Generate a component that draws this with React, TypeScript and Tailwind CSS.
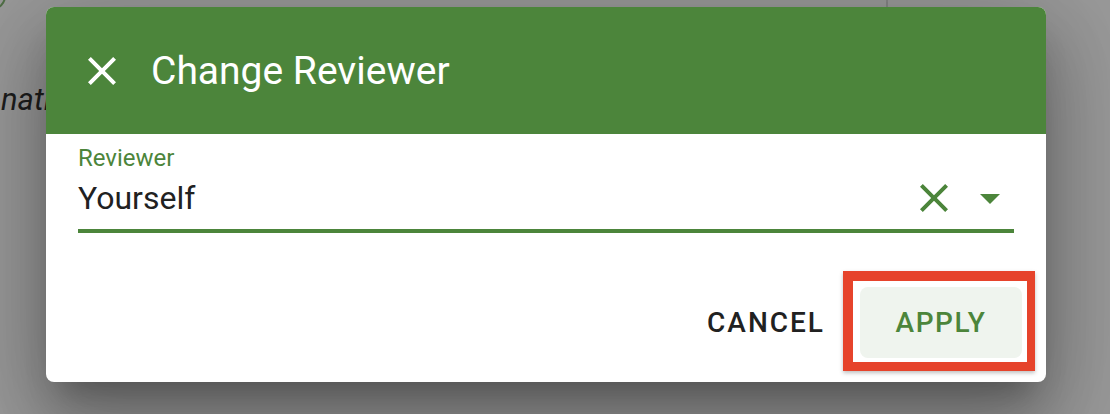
import React from 'react';

const green = '#4c853b';

function CloseIcon({ className }: { className?: string }) {
  return (
    <svg viewBox="0 0 24 24" className={className} fill="currentColor">
      <path d="M19 6.41 17.59 5 12 10.59 6.41 5 5 6.41 10.59 12 5 17.59 6.41 19 12 13.41 17.59 19 19 17.59 13.41 12z" />
    </svg>
  );
}

function ArrowDropDownIcon({ className }: { className?: string }) {
  return (
    <svg viewBox="0 0 24 24" className={className} fill="currentColor">
      <path d="M7 10l5 5 5-5z" />
    </svg>
  );
}

export default function App() {
  return (
    <div className="relative w-[1110px] h-[414px] overflow-hidden bg-[#999999] font-['Roboto',_'Liberation_Sans',_sans-serif]">
      {/* page underneath the backdrop */}
      <div className="flex flex-col">
        <div className="flex h-[8px]">
          <div className="ml-[886px] w-[2px] bg-[#848484]" />
        </div>
        <div className="absolute -left-[22px] -top-[18px] w-[28px] h-[28px] rounded-full border-2 border-[#4f6e45]" />
        <div className="mt-[72px] pl-[1px] text-[31px] italic leading-[40px] text-[#1d1d1d]">nation</div>
      </div>

      {/* dialog */}
      <div className="absolute left-[46px] top-[7px] w-[1000px] h-[375px] flex flex-col rounded-[8px] overflow-hidden bg-white shadow-[0_22px_30px_-14px_rgba(0,0,0,0.25),0_48px_76px_6px_rgba(0,0,0,0.2),0_18px_92px_16px_rgba(0,0,0,0.16)]">
        <div className="h-[127px] flex items-center pl-[32px] bg-[#4c853b] text-white">
          <button className="w-[48px] h-[48px] flex items-center justify-center">
            <CloseIcon className="w-[48px] h-[48px]" />
          </button>
          <h2 className="ml-[25px] text-[39px] leading-[48px] font-normal">Change Reviewer</h2>
        </div>

        <div className="px-[32px] pt-[12px]">
          <label className="block text-[24px] leading-[24px]" style={{ color: green }}>
            Reviewer
          </label>
          <div className="h-[63px] flex items-center border-b-4 border-[#4c853b]">
            <span className="flex-1 text-[32px] leading-[32px] text-[#212121] -mt-[4px]">Yourself</span>
            <div className="flex items-center gap-[8px] -mt-[4px] text-[#4c853b]">
              <CloseIcon className="w-[48px] h-[48px]" />
              <ArrowDropDownIcon className="w-[48px] h-[48px]" />
            </div>
          </div>
        </div>

        <div className="mt-auto flex items-center justify-end gap-[19px] pr-[24px] pb-[24px]">
          <button className="h-[71px] px-[16px] text-[28px] font-medium tracking-[2px] text-[#212121]">CANCEL</button>
          <div className="relative">
            <button className="w-[162px] h-[71px] rounded-[8px] bg-[#eff4ee] text-[28px] font-medium tracking-[1.6px] text-[#4c853b]">
              APPLY
            </button>
            <div className="absolute -left-[17px] -top-[16px] -right-[13px] -bottom-[13px] border-t-[10px] border-l-[10px] border-r-[8px] border-b-[9px] border-[#e6432b] shadow-[0_2px_4px_rgba(0,0,0,0.25)]" />
          </div>
        </div>
      </div>
    </div>
  );
}
